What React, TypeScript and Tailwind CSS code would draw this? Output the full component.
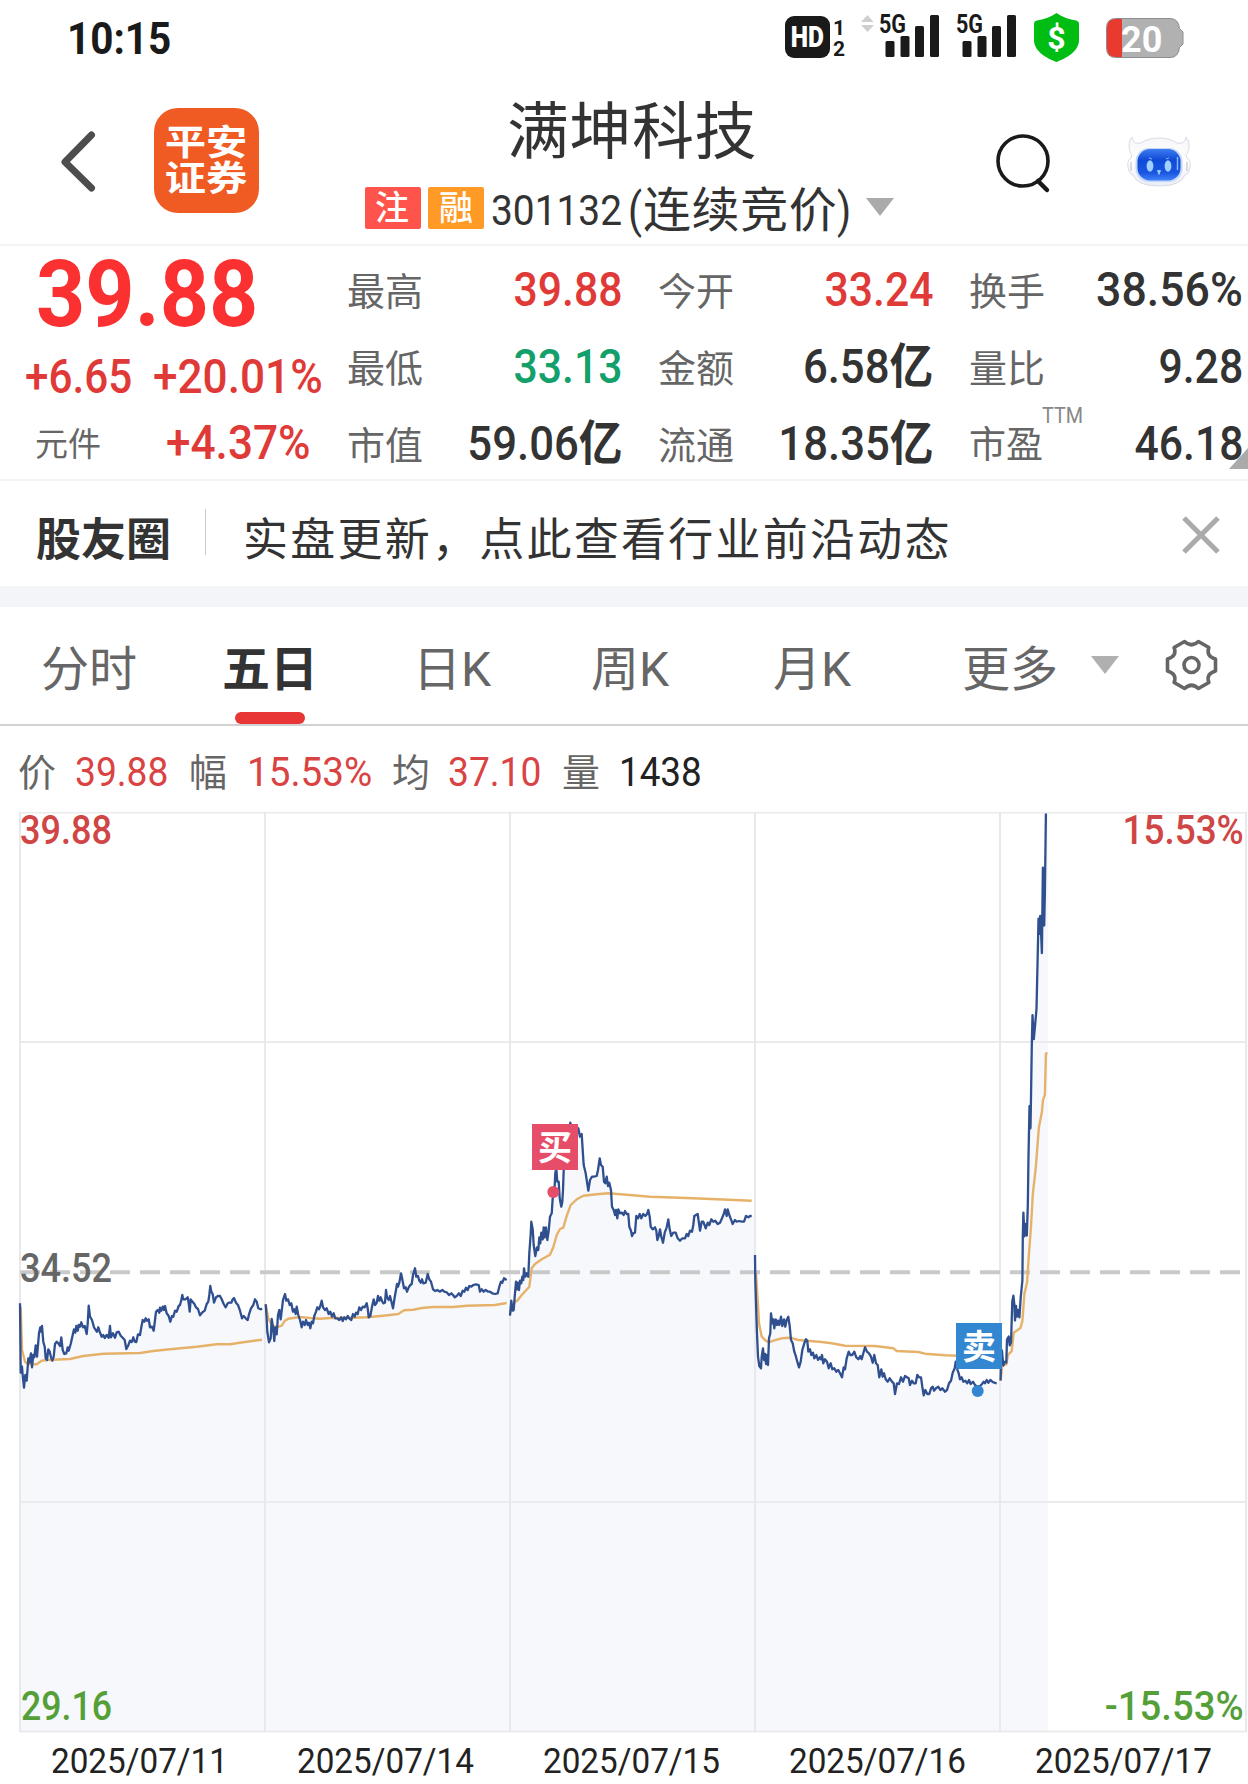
import type { ReactNode } from "react";
import clsx from "clsx";

type Stat = { label: string; value: string; tone?: "up" | "down"; note?: string };

const stats: Stat[] = [
  { label: "最高", value: "39.88", tone: "up" },
  { label: "今开", value: "33.24", tone: "up" },
  { label: "换手", value: "38.56%" },
  { label: "最低", value: "33.13", tone: "down" },
  { label: "金额", value: "6.58亿" },
  { label: "量比", value: "9.28" },
  { label: "市值", value: "59.06亿" },
  { label: "流通", value: "18.35亿" },
  { label: "市盈", value: "46.18", note: "TTM" },
];

const dates = ["2025/07/11", "2025/07/14", "2025/07/15", "2025/07/16", "2025/07/17"];

// one entry per trading day, points are local to the day's own origin and scale
const days = [
  {
    x: 0, y: 1240, sx: 3, sy: 3,
    price:
      "60,190 62,398 66,380 68,405 72,443 76,405 80,422 85,355 88,368 93,340 96,382 100,345 103,352 107,316 111,350 117,280 121,262 124,275 126,258 130,305 134,320 137,355 141,360 145,328 149,335 153,352 157,362 161,350 165,312 170,305 175,310 180,318 184,292 188,330 193,342 199,340 203,322 206,332 212,312 218,285 222,268 226,278 229,258 233,272 236,255 240,260 244,247 249,262 254,258 260,282 263,250 266,197 270,230 276,240 282,262 287,270 291,275 295,262 299,275 305,290 310,285 314,294 320,285 326,293 330,258 333,292 339,280 345,293 350,277 356,275 362,287 368,293 374,300 379,327 384,318 390,302 395,306 400,292 404,305 409,306 414,283 420,285 424,262 428,240 433,245 437,235 441,242 446,238 450,262 456,260 461,272 465,240 468,215 473,210 478,218 480,203 484,212 488,200 492,210 495,198 500,220 506,228 511,245 516,228 520,230 525,212 530,215 536,198 540,195 544,180 547,165 550,178 556,178 563,172 566,190 569,215 572,178 577,185 582,190 588,202 594,207 600,226 606,218 614,212 620,192 625,185 628,165 631,138 634,155 638,162 642,188 648,172 654,168 660,168 665,178 671,192 677,202 683,190 688,188 694,188 698,178 702,174 708,188 714,195 720,212 726,235 731,228 737,235 743,240 748,220 753,205 760,195 765,178 770,185 775,205 782,208 786,205",
    avg: "62,200 66,330 75,365 85,373 110,373 125,362 140,360 210,357 250,348 310,341 420,339 460,333 510,328 590,320 650,313 690,313 740,305 786,299",
  },
  {
    x: 250, y: 1240, sx: 3, sy: 3,
    price:
      "47,193 50,240 52,275 57,307 62,295 65,237 69,262 73,303 76,262 80,283 84,225 88,210 92,238 96,205 99,180 105,162 109,182 114,178 119,195 124,190 129,215 133,208 137,222 140,200 145,225 150,240 155,262 159,245 164,255 168,240 173,255 177,248 181,265 185,245 189,250 193,228 198,215 202,202 207,208 211,198 215,182 219,202 225,210 230,205 236,222 241,215 246,230 251,220 256,235 262,235 268,240 274,232 278,243 283,232 288,238 293,228 298,235 304,240 309,222 314,230 318,218 323,222 328,202 333,210 338,200 344,202 350,190 353,205 356,232 361,228 366,200 371,178 375,195 380,188 384,168 388,182 392,172 396,183 400,190 405,188 408,150 411,172 416,180 420,168 425,188 429,205 434,172 438,150 441,132 444,140 448,128 453,100 457,118 462,145 467,142 471,155 476,142 481,135 485,132 489,105 495,85 499,110 504,108 508,122 512,128 516,118 520,130 527,128 533,102 538,118 543,125 549,148 556,153 562,150 570,155 577,150 583,155 590,157 597,165 604,160 609,165 614,172 620,168 627,160 632,168 638,152 643,155 648,143 653,150 658,138 664,140 670,135 678,133 686,135 690,155 695,148 701,155 707,150 714,155 720,155 727,160 735,162 743,160 748,140 753,125 757,128 762,115 770,120",
    avg: "47,193 55,235 65,255 80,262 95,257 105,242 115,236 150,231 180,234 210,236 250,233 290,234 350,232 400,227 445,222 462,211 490,209 515,204 550,201 610,201 650,197 735,195 770,189",
  },
  {
    x: 500, y: 1110, sx: 3, sy: 3,
    price:
      "30,617 34,572 38,602 41,600 44,560 48,515 51,538 54,518 57,540 60,512 64,520 67,500 70,510 72,475 76,500 80,490 85,500 88,430 92,372 94,335 98,358 101,405 106,438 111,412 115,420 118,382 121,400 124,368 128,388 131,352 134,382 138,352 142,390 146,362 150,320 155,310 158,265 163,250 166,190 169,175 172,215 176,215 179,265 184,290 187,275 189,240 191,180 200,80 205,70 211,38 216,60 225,80 235,55 240,80 245,72 248,120 251,165 257,190 260,210 265,242 270,210 276,200 282,200 290,198 294,180 299,145 303,165 308,170 312,215 316,220 320,200 324,228 328,218 333,240 336,290 341,300 345,315 348,300 352,325 355,298 360,310 366,308 371,315 375,303 380,312 385,312 388,350 393,362 396,378 400,370 405,368 409,318 414,325 419,312 424,325 430,312 436,318 441,312 445,300 449,320 452,350 458,358 465,352 469,362 472,390 476,378 480,358 484,380 489,398 494,368 500,352 505,328 509,358 514,378 520,368 527,368 533,385 540,392 547,385 555,385 560,372 565,378 570,362 576,365 580,345 583,318 593,312 597,340 600,362 605,335 610,335 617,355 623,338 628,345 634,328 640,335 646,332 653,342 660,338 666,325 672,310 675,298 680,318 683,298 688,315 693,328 698,342 705,330 710,335 718,333 725,335 732,335 738,318 745,322 750,318 755,318",
    avg: "30,610 45,575 52,572 65,555 88,530 95,475 105,462 125,448 150,434 160,412 170,375 180,357 190,353 200,318 212,285 230,268 250,257 290,253 325,250 380,254 450,260 560,264 650,268 755,272",
  },
  {
    x: 745, y: 1240, sx: 3, sy: 3,
    price:
      "30,45 31,120 34,220 36,280 39,350 43,378 48,385 50,350 54,325 57,360 60,342 63,372 66,345 69,375 72,295 76,280 78,220 82,250 85,238 88,265 92,238 96,255 99,242 103,255 108,230 112,258 117,238 121,260 125,240 130,230 134,258 138,300 143,310 148,335 153,350 157,365 162,382 167,365 172,330 178,310 183,298 187,302 190,335 195,328 199,345 204,338 208,355 214,345 219,360 224,352 228,358 231,345 235,370 240,358 246,365 251,385 257,370 262,388 268,385 274,395 280,390 285,400 291,412 296,382 300,388 305,355 311,335 316,345 322,345 328,335 334,352 340,358 346,348 350,358 355,340 360,322 366,335 372,340 378,350 383,368 388,345 393,370 398,375 403,412 409,388 413,410 417,400 422,418 428,425 434,415 441,425 446,430 450,462 456,430 462,432 468,412 474,425 480,408 486,412 491,415 495,435 501,422 506,430 512,430 517,405 522,412 528,412 532,440 536,466 541,450 547,462 553,462 558,445 563,440 567,452 573,445 580,440 586,450 592,445 600,455 606,450 612,430 618,422 623,398 629,385 632,365 637,388 641,400 645,418 650,412 655,425 661,422 667,430 672,420 677,432 684,425 690,435 696,440 705,438 711,432 716,425 720,430 725,420 730,428 736,420 742,425 748,428 755,430",
    avg: "33,100 38,180 42,250 50,290 62,302 72,307 85,302 110,295 135,293 160,300 185,302 230,306 260,310 300,317 390,318 445,325 455,333 520,336 540,341 600,346 640,347",
  },
  {
    x: 960, y: 800, sx: 2.98, sy: 2.613,
    price:
      "121,1517 122,1470 125,1438 129,1478 134,1468 138,1470 140,1410 145,1402 148,1425 152,1418 154,1360 156,1310 159,1295 162,1320 164,1360 167,1322 170,1350 173,1332 177,1352 181,1300 186,1255 187,1140 189,1078 192,1140 195,1108 199,1138 202,1060 204,930 207,800 210,858 212,760 214,640 216,562 220,625 224,585 228,545 231,430 234,310 237,350 239,303 242,355 244,400 246,240 247,177 251,328 253,240 256,35",
    avg: "121,1517 126,1475 138,1475 143,1450 154,1440 160,1392 180,1380 186,1362 192,1290 200,1260 206,1180 212,1110 217,1030 226,960 235,855 244,815 247,785 253,770 256,663 261,661",
  },
];

const toPage = (day: (typeof days)[number], points: string) =>
  points
    .split(" ")
    .map((p) => {
      const [px, py] = p.split(",").map(Number);
      return `${(day.x + px / day.sx).toFixed(1)},${(day.y + py / day.sy).toFixed(1)}`;
    })
    .join(" ");

function Num({ children, className }: { children: ReactNode; className?: string }) {
  return <span className={clsx("inline-block whitespace-nowrap leading-none", className)}>{children}</span>;
}

function Signal() {
  return (
    <div className="relative h-[42px] w-[60px]">
      <span className="absolute left-[-1px] top-0 origin-left scale-x-[.86] text-[25px] font-bold leading-[19px] text-[#1a1a1a]">5G</span>
      <svg className="absolute inset-0" width="60" height="42" fill="#1a1a1a">
        <rect x="5.500" y="26" width="9" height="16" rx="1.500" />
        <rect x="20.500" y="21" width="9" height="21" rx="1.500" />
        <rect x="35" y="11" width="9" height="31" rx="1.500" />
        <rect x="50" y="0" width="9" height="42" rx="1.500" />
      </svg>
    </div>
  );
}

function StatusBar() {
  return (
    <div className="flex h-[76px] items-start pl-[67px] pt-[15px]">
      <Num className="mt-[2px] w-[718px] text-[44px] font-bold text-[#1a1a1a]">
        <span className="inline-block origin-left scale-x-[.92]">10:15</span>
      </Num>
      <div className="mt-px flex h-[42px] w-[45px] items-center justify-center rounded-[9px] bg-[#1a1a1a]">
        <span className="scale-x-[.82] text-[30px] font-black leading-none text-white">HD</span>
      </div>
      <div className="ml-[3px] flex w-[28px] flex-col pt-[3px] text-[21px] font-bold leading-[20px] text-[#1a1a1a]">
        <span className="h-[21px]">1</span>
        <span>2</span>
      </div>
      <svg width="13" height="18" viewBox="0 0 13 18" fill="#cfcfcf">
        <path d="M6.500 0l6 7H0zM0 10h13l-6.500 7z" />
      </svg>
      <div className="ml-[6px]">
        <Signal />
      </div>
      <div className="ml-[17px]">
        <Signal />
      </div>
      <div className="relative ml-[17px] -mt-[2px] flex h-[49px] w-[45px] items-center justify-center">
        <svg className="absolute inset-0" width="45" height="49" viewBox="0 0 45 49" fill="#00bd13">
          <path d="M22.500 0C28 4 36 6.500 42 7.500Q45 8 45 11v16c0 11-12 18-22.500 22C12 45 0 38 0 27V11q0-3 3-3.500C9 6.500 17 4 22.500 0z" />
        </svg>
        <span className="relative text-[32px] font-bold leading-none text-white">$</span>
      </div>
      <div className="relative ml-[27px] mt-[3px] h-[40px] w-[78px]">
        <svg width="78" height="40" viewBox="0 0 78 40">
          <path d="M10 .5h54q8.500 0 9.500 10l3.500 3.500v12l-3.500 3.500q-1 10-9.500 10H10Q.5 39.500.5 30V10Q.5.5 10 .5z" fill="#b1b1b1" stroke="#8e8e8e" />
          <path d="M16 1h-6Q1 1 1 10v20q0 9 9 9h6z" fill="#e93a30" />
        </svg>
        <span className="absolute left-[15px] top-[4px] text-[36px] font-bold leading-none text-white">20</span>
      </div>
    </div>
  );
}

function Robot() {
  return (
    <svg width="64" height="52" viewBox="0 0 64 52">
      <defs>
        <linearGradient id="face" x1="0" y1="0" x2="0" y2="1">
          <stop offset="0" stopColor="#3d7df0" />
          <stop offset=".35" stopColor="#0f4ad6" />
          <stop offset=".75" stopColor="#1a56e2" />
          <stop offset="1" stopColor="#3f82f7" />
        </linearGradient>
        <linearGradient id="shell" x1="0" y1="0" x2="0" y2="1">
          <stop offset="0" stopColor="#f7f7fa" />
          <stop offset=".5" stopColor="#ffffff" />
          <stop offset="1" stopColor="#e9edf6" />
        </linearGradient>
      </defs>
      <path d="M5 1C1 5 1 14 5 19l-1 3Q0 24 1 31t5 8q4 11 26 11t26-11q4-1 5-8t-3-9l-1-3c4-5 4-14 0-18-1 5-3 7-9 6Q43 2 32 2T14 7C8 8 6 6 5 1z" fill="url(#shell)" stroke="#d9dce5" />
      <rect x="8.500" y="12" width="47" height="34" rx="14" fill="#c3d5f8" />
      <rect x="10.500" y="13" width="43" height="31.500" rx="12.500" fill="url(#face)" />
      <ellipse cx="23" cy="30" rx="3.400" ry="5.800" fill="#9fd0ff" />
      <ellipse cx="41" cy="30" rx="3.400" ry="5.800" fill="#9fd0ff" />
      <path d="M30.500 34.500h3l-1.500 4zM22 22l3 1M42 22l-3 1" fill="#9fd0ff" stroke="#9fd0ff" strokeWidth=".8" />
      <path d="M50.500 21v13" stroke="#86b4ff" strokeWidth="1.500" />
      <path d="M4 26v9M60 26v9" stroke="#c8b4bd" strokeWidth="1" />
    </svg>
  );
}

function Header() {
  return (
    <header className="flex h-[170px] items-start border-b-2 border-[#f4f4f4] pl-[60px]">
      <svg className="mt-[54px]" width="37" height="64" viewBox="0 0 37 64" fill="none">
        <path d="M31.500 5L5 32l26.500 26" stroke="#4d4d4d" strokeWidth="7" strokeLinecap="round" strokeLinejoin="round" />
      </svg>
      <div className="ml-[57px] mt-[32px] flex h-[105px] w-[105px] flex-col items-center justify-center rounded-[24px] bg-[#f05a23] pt-[2px] text-[35px] font-bold leading-[35px] text-white">
        <span className="h-[36px] scale-x-[1.18]">平安</span>
        <span className="h-[35px] scale-x-[1.18]">证券</span>
      </div>
      <div className="ml-[106px] flex w-[539px] flex-col">
        <h1 className="ml-[142px] mt-[26px] text-[62px] leading-none tracking-[.5px] text-[#333]">满坤科技</h1>
        <div className="mt-[17px] flex h-[54px] items-center">
          <span className="flex h-[42px] w-[56px] items-center justify-center rounded-[2px] bg-[#ff544c] pr-[2px] text-[34px] font-medium leading-none text-white">注</span>
          <span className="ml-[7px] flex h-[42px] w-[56px] items-center justify-center rounded-[2px] bg-[#ff9a26] text-[34px] font-medium leading-none text-white">融</span>
          <Num className="ml-[7px] mt-[5px] w-[134px] origin-left scale-x-[.925] text-[42px] text-[#333]">301132</Num>
          <Num className="ml-[3px] mt-[6px] text-[48px] tracking-[.6px] text-[#333]">
            <span className="inline-block w-[15px] origin-left scale-x-[.85]">(</span>
            连续竞价
            <span className="inline-block w-[15px] origin-left scale-x-[.85]">)</span>
          </Num>
          <svg className="ml-[14px] -mt-[3px]" width="28" height="18" viewBox="0 0 28 18">
            <path d="M0 0h28L14 18z" fill="#aaa" />
          </svg>
        </div>
      </div>
      <svg className="ml-[91px] mt-[56px]" width="58" height="62" viewBox="0 0 58 62" fill="none" stroke="#1a1a1a">
        <circle cx="28" cy="29" r="25" strokeWidth="3.600" />
        <path d="M43 49l9 9" strokeWidth="4.500" strokeLinecap="round" />
      </svg>
      <div className="ml-[74px] mt-[60px]">
        <Robot />
      </div>
    </header>
  );
}

function Value({ stat }: { stat: Stat }) {
  const yi = stat.value.endsWith("亿");
  return (
    <Num
      className={clsx(
        "origin-right text-[48px] font-medium",
        stat.value.endsWith("%") ? "scale-x-[.93]" : yi ? "scale-x-[.91]" : "scale-x-[.89]",
        stat.tone === "up" && "text-[#e03a38]",
        stat.tone === "down" && "text-[#14a06a]",
        !stat.tone && "text-[#333]",
      )}
    >
      {yi ? stat.value.slice(0, -1) : stat.value}
      {yi && <span className="font-bold">亿</span>}
    </Num>
  );
}

function Quote() {
  return (
    <section className="relative flex h-[235px] border-b-2 border-[#f4f4f4]">
      <div className="w-[347px] shrink-0 text-[#e03a38]">
        <div className="mt-[1px] pl-[36px] pt-[1px]">
          <Num className="origin-left scale-x-[.925] text-[93px] font-bold text-[#fb3131]">39.88</Num>
        </div>
        <div className="mt-[12px] flex text-[48px] font-medium">
          <Num className="ml-[25px] w-[128px] origin-left scale-x-[.88]">+6.65</Num>
          <Num className="origin-left scale-x-[.92]">+20.01%</Num>
        </div>
        <div className="mt-[18px] flex items-center">
          <span className="ml-[35px] mt-[2px] w-[131px] text-[33px] leading-none text-[#666]">元件</span>
          <Num className="origin-left scale-x-[.92] text-[48px] font-medium">+4.37%</Num>
        </div>
      </div>
      <div className="grid w-[896px] grid-cols-[311px_311px_274px] grid-rows-[77px_77px_77px] pt-[5px]">
        {stats.map((s, i) => (
          <div key={s.label} className={clsx("relative flex items-center justify-between", i % 3 !== 2 && "pr-[36px]")}>
            <span className={clsx("mt-[4px] leading-none text-[#666]", s.note ? "text-[37px]" : "text-[38px]")}>{s.label}</span>
            {s.note && (
              <span className="absolute left-[73px] top-0 origin-left scale-x-[.9] text-[22px] leading-none text-[#888]">{s.note}</span>
            )}
            <Value stat={s} />
          </div>
        ))}
      </div>
      <svg className="absolute bottom-[10px] right-0" width="19" height="21" viewBox="0 0 19 21">
        <path d="M19 0v21H0z" fill="#aaa" />
      </svg>
    </section>
  );
}

function Notice() {
  return (
    <section className="flex h-[126px] items-start border-b-[21px] border-[#f3f5f9] pl-[36px] pt-[28px]">
      <span className="mt-[9px] w-[169px] text-[45px] font-bold leading-none text-[#333]">股友圈</span>
      <span className="h-[46px] w-px bg-[#ccc]" />
      <span className="ml-[37px] mt-[9px] w-[939px] text-[45px] leading-none tracking-[2.250px] text-[#333]">实盘更新，点此查看行业前沿动态</span>
      <svg className="mt-[7px]" width="38" height="38" viewBox="0 0 38 38">
        <path d="M2 2l34 34M36 2L2 36" stroke="#aaa" strokeWidth="5" />
      </svg>
    </section>
  );
}

function Tabs() {
  return (
    <nav className="relative flex h-[119px] items-start border-b-2 border-[#d2d2d2] pl-[41px] pt-[39px] text-[48px] leading-none text-[#666]">
      <span className="w-[181px]">分时</span>
      <span className="w-[191px] font-bold text-[#333]">五日</span>
      <span className="w-[178px]">日K</span>
      <span className="w-[182px]">周K</span>
      <span className="w-[189px]">月K</span>
      <span className="w-[129px]">更多</span>
      <svg className="mt-[10px]" width="28" height="18" viewBox="0 0 28 18">
        <path d="M0 0h28L14 18z" fill="#b0b0b0" />
      </svg>
      <svg className="ml-[46px] -mt-[7px]" width="53" height="52" viewBox="0 0 52 52" fill="none" stroke="#666" strokeWidth="3.600" strokeLinejoin="round">
        <path d="M50 20V32Q40 35 43.400 43.500L32.900 49.500Q26 43 19.100 49.500L8.600 43.500Q12 35 2 32V20Q12 17 8.600 8.500L19.100 2.500Q26 9 32.900 2.500L43.400 8.500Q40 17 50 20Z" />
        <circle cx="26" cy="26" r="7.500" />
      </svg>
      <span className="absolute bottom-0 left-[235px] h-[12px] w-[70px] rounded-full bg-[#e83535]" />
    </nav>
  );
}

function Readout() {
  return (
    <div className="flex h-[86px] items-center pl-[18px] pt-[7px] text-[38px] leading-none text-[#666]">
      <span className="w-[57px]">价</span>
      <Num className="w-[114px] origin-left scale-x-[.93] text-[40px] text-[#d94343]">39.88</Num>
      <span className="w-[58px]">幅</span>
      <Num className="w-[145px] origin-left scale-x-[.965] text-[40px] text-[#d94343]">15.53%</Num>
      <span className="w-[56px]">均</span>
      <Num className="w-[114px] origin-left scale-x-[.93] text-[40px] text-[#d94343]">37.10</Num>
      <span className="w-[57px]">量</span>
      <Num className="origin-left scale-x-[.92] text-[40px] text-[#222]">1438</Num>
    </div>
  );
}

function Chart() {
  return (
    <div className="relative h-[921px]">
      <svg className="block" width="1248" height="921" viewBox="0 812 1248 921" fill="none">
        {days.map((d) => {
          const pts = toPage(d, d.price).split(" ");
          const [first] = pts[0].split(",");
          const [lastX, lastY] = pts[pts.length - 1].split(",");
          const end = d.x === 960 ? 1048 : Number(lastX) + 3;
          return <polygon key={d.x} points={`${first},1731 ${pts.join(" ")} ${end},${lastY} ${end},1731`} fill="#f6f8fc" />;
        })}
        <path d="M20 812.500H1246M20 1042H1246M20 1502H1246M20 1731.500H1246" stroke="#ebebed" strokeWidth="2" />
        <path d="M20 812V1732M265 812V1732M510 812V1732M755 812V1732M1000 812V1732M1246 812V1732" stroke="#e6e7ea" strokeWidth="1.800" />
        <path d="M20 1272.300H1242" stroke="#c9c9c9" strokeWidth="4" strokeDasharray="20 10" />
        {days.map((d) => (
          <g key={d.x} strokeLinejoin="round">
            <polyline points={toPage(d, d.avg)} stroke="#e6b26a" strokeWidth="2.400" />
            <polyline points={toPage(d, d.price)} stroke="#2f4f8f" strokeWidth="2.300" />
          </g>
        ))}
        <circle cx="553.300" cy="1192" r="6" fill="#e54d68" />
        <circle cx="977.700" cy="1391" r="6" fill="#3386d0" />
      </svg>

      <Num className="absolute left-[20px] top-[-2px] origin-left scale-x-[.88] text-[41px] font-medium text-[#d04545]">39.88</Num>
      <Num className="absolute right-[4px] top-[-2px] origin-right scale-x-[.9] text-[41px] font-medium text-[#d04545]">15.53%</Num>
      <Num className="absolute left-[20px] top-[436px] origin-left scale-x-[.88] text-[41px] font-medium text-[#666]">34.52</Num>
      <Num className="absolute left-[21px] top-[874px] origin-left scale-x-[.87] text-[41px] font-medium text-[#559f38]">29.16</Num>
      <Num className="absolute right-[4px] top-[874px] origin-right scale-x-[.935] text-[41px] font-medium text-[#559f38]">-15.53%</Num>

      <span className="absolute left-[532px] top-[312px] flex h-[46px] w-[46px] items-center justify-center bg-[#e54d68] pt-[2px] text-[34px] font-bold leading-none text-white">买</span>
      <span className="absolute left-[956px] top-[511px] flex h-[46px] w-[46px] items-center justify-center bg-[#3386d0] pt-[2px] text-[34px] font-bold leading-none text-white">卖</span>
    </div>
  );
}

export default function App() {
  return (
    <main className="h-[1784px] w-[1248px] overflow-hidden bg-white [font-family:Roboto,'Noto_Sans_CJK_SC',sans-serif]">
      <StatusBar />
      <Header />
      <Quote />
      <Notice />
      <Tabs />
      <Readout />
      <Chart />
      <div className="flex h-[51px] pl-[51px] pt-[11px] text-[35px] text-[#222]">
        {dates.map((d) => (
          <Num key={d} className="w-[246px] shrink-0 origin-left">
            <span className="inline-block origin-left scale-x-[.95]">{d}</span>
          </Num>
        ))}
      </div>
    </main>
  );
}
